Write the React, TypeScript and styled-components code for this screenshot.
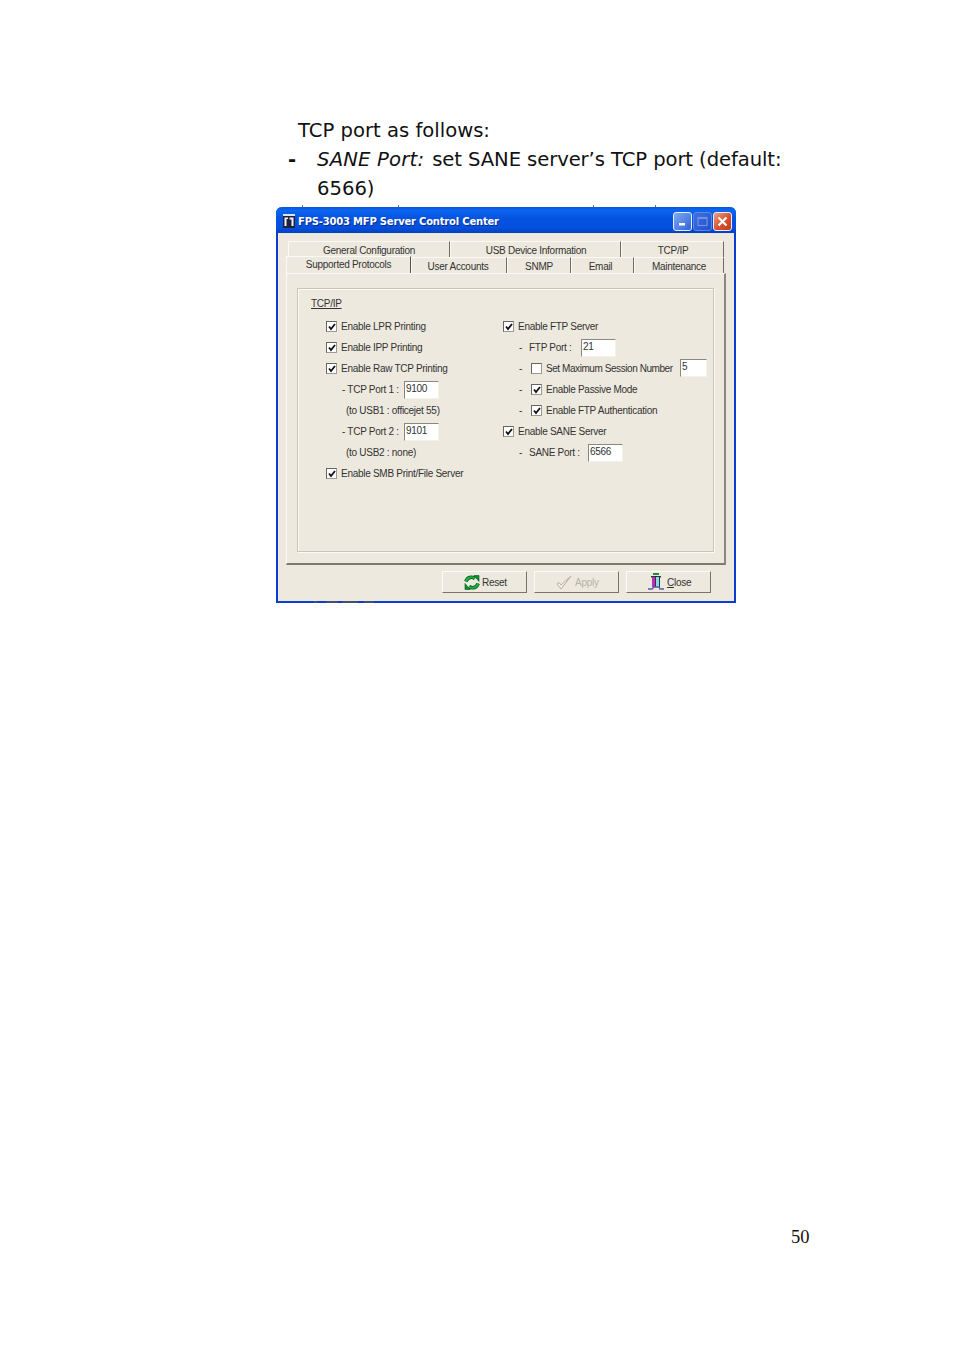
import React from "react";
import styled, { createGlobalStyle } from "styled-components";

const Global = createGlobalStyle`
  html, body { margin: 0; padding: 0; background: #fff; }
`;

const Page = styled.div`
  width: 954px;
  height: 1351px;
  position: relative;
  overflow: hidden;
  padding-top: 116px;
  box-sizing: border-box;
  font-family: "DejaVu Sans", Verdana, sans-serif;
  font-size: 19.6px;
  color: #111;
`;

const DocLine = styled.div<{ $indent: number }>`
  height: 29px;
  line-height: 29px;
  padding-left: ${(p) => p.$indent}px;
  white-space: pre;
  display: flex;
`;

const Dash = styled.span`
  width: 29px;
  margin-left: -29px;
  font-weight: bold;
`;

const Em = styled.em`
  font-style: italic;
  letter-spacing: 0.2px;
  margin-right: 8px;
`;

const DocRest = styled.span`
  letter-spacing: -0.09px;
`;

const Window = styled.div`
  position: relative;
  margin: 4px 0 0 276px;
  width: 460px;
  height: 396px;
  box-sizing: border-box;
  background: #ede9de;
  border: solid #0a3ed0;
  border-width: 0 2px 2px 2px;
  border-radius: 6px 6px 0 0;
  font-family: "Liberation Sans", Arial, sans-serif;
  font-size: 10px;
  letter-spacing: -0.28px;
  color: #333;
  display: flex;
  flex-direction: column;
`;

const Ticks = styled.div`
  position: absolute;
  top: -2px;
  left: 0;
  width: 100%;
  height: 2px;
`;

const Tick = styled.i<{ $x: number }>`
  position: absolute;
  left: ${(p) => p.$x}px;
  top: 0;
  width: 1px;
  height: 2px;
  background: #666;
`;

const Remnant = styled.svg`
  position: absolute;
  left: 34px;
  top: 394px;
`;

const TitleBar = styled.div`
  height: 26px;
  margin: 0 -2px;
  flex: none;
  border-radius: 6px 6px 0 0;
  background: linear-gradient(180deg, #0a56d8 0%, #0b66f0 12%, #0453e0 45%, #0450dc 80%, #0340c0 100%);
  display: flex;
  align-items: center;
  padding: 2px 4px 0 7px;
  box-sizing: border-box;
`;

const TitleText = styled.div`
  margin-left: 3px;
  color: #fff;
  font-family: "DejaVu Sans", Verdana, sans-serif;
  font-weight: bold;
  font-size: 10px;
  letter-spacing: -0.2px;
  text-shadow: 1px 1px 0 #0a2a90;
  flex: 1;
  white-space: nowrap;
`;

const CaptionBtn = styled.div<{ $kind: "min" | "max" | "close" }>`
  width: 19px;
  height: 19px;
  margin-left: 1px;
  box-sizing: border-box;
  border: 1px solid ${(p) => (p.$kind === "max" ? "#5f86e0" : "#e6edfc")};
  border-radius: 3px;
  display: flex;
  align-items: center;
  justify-content: center;
  background: ${(p) =>
    p.$kind === "close"
      ? "linear-gradient(135deg,#ea9f84,#d9512c 55%,#c23a1a)"
      : p.$kind === "max"
      ? "linear-gradient(135deg,#3f6fe0,#2052cf)"
      : "linear-gradient(135deg,#82a8f0,#2d64dc)"};
`;

const Body = styled.div`
  flex: 1;
  display: flex;
  flex-direction: column;
  padding: 0 8px;
`;

const Tabs = styled.div`
  padding-top: 8px;
`;

const TabRow = styled.div`
  display: flex;
  height: 16px;
  margin-left: 2px;
  position: relative;
`;

const Tab = styled.div<{ $w: number; $active?: boolean; $shift?: number }>`
  width: ${(p) => p.$w}px;
  box-sizing: border-box;
  text-align: center;
  line-height: 17px;
  padding-left: ${(p) => Math.max(p.$shift ?? 0, 0)}px;
  padding-right: ${(p) => Math.max(-(p.$shift ?? 0), 0)}px;
  border-top: 1px solid #fbfaf4;
  border-left: 1px solid #fbfaf4;
  border-right: 1px solid #6f6c60;
  white-space: nowrap;
  ${(p) =>
    p.$active &&
    `margin-top:-1px;margin-left:-2px;height:17px;line-height:16px;z-index:2;background:#ede9de;border-right:1px solid #55534a;`}
`;

const Panel = styled.div`
  box-sizing: border-box;
  height: 292px;
  padding: 14px 10px 0 10px;
  border-top: 1px solid #fbfaf4;
  border-left: 1px solid #fbfaf4;
  border-right: 2px solid #8b897c;
  border-bottom: 2px solid #7c7a6e;
`;

const Group = styled.div`
  box-sizing: border-box;
  height: 264px;
  border: 1px solid #c8c6b6;
  box-shadow: inset 1px 1px 0 #fbfaf4, 1px 1px 0 #fbfaf4;
  padding: 8px 0 0 13px;
`;

const GroupTitle = styled.div`
  height: 14px;
  line-height: 14px;
  text-decoration: underline;
  margin-bottom: 5px;
`;

const Columns = styled.div`
  display: flex;
`;

const Col = styled.div<{ $w: number; $pad: number }>`
  width: ${(p) => p.$w}px;
  padding-left: ${(p) => p.$pad}px;
  box-sizing: border-box;
`;

const Row = styled.div<{ $indent?: number }>`
  height: 21px;
  display: flex;
  align-items: center;
  padding-left: ${(p) => p.$indent ?? 0}px;
  white-space: pre;
`;

const Label = styled.span<{ $w: number; $tight?: boolean }>`
  width: ${(p) => p.$w}px;
  flex: none;
  letter-spacing: ${(p) => (p.$tight ? "-0.43px" : "inherit")};
`;

const DashMark = styled.span<{ $w: number }>`
  width: ${(p) => p.$w}px;
  flex: none;
`;

const Box = styled.span`
  width: 11px;
  height: 11px;
  box-sizing: border-box;
  margin: 0 4px 0 -1px;
  flex: none;
  background: #fff;
  border: 1px solid;
  border-color: #666660 #9a9a90 #9a9a90 #666660;
  display: flex;
  align-items: center;
  justify-content: center;
`;

const BoxGap = styled.span`
  width: 1px;
  flex: none;
`;

const Field = styled.span<{ $w: number; $raise?: boolean }>`
  width: ${(p) => p.$w}px;
  height: 18px;
  box-sizing: border-box;
  padding-left: 1px;
  line-height: 14px;
  background: #fff;
  border: 1px solid;
  border-color: #8a887c #f4f2e8 #f4f2e8 #8a887c;
  flex: none;
  margin-top: ${(p) => (p.$raise ? "-2px" : "0")};
`;

const Footer = styled.div`
  display: flex;
  justify-content: flex-end;
  gap: 7px;
  padding: 6px 15px 0 0;
`;

const Button = styled.div<{ $off?: boolean; $gap?: number }>`
  width: 85px;
  height: 22px;
  box-sizing: border-box;
  border: 1px solid;
  border-color: #fbfaf4 #77756a #77756a #fbfaf4;
  display: flex;
  align-items: center;
  padding-left: 21px;
  gap: ${(p) => p.$gap ?? 2}px;
  color: ${(p) => (p.$off ? "#b6b4a6" : "#333")};
`;

const Mnemonic = styled.span`
  text-decoration: underline;
`;

const PageNum = styled.div`
  position: absolute;
  left: 791px;
  top: 1227px;
  font-family: "Liberation Serif", "Times New Roman", serif;
  font-size: 18.5px;
  color: #111;
`;

const Check = () => (
  <svg width="8" height="8" viewBox="0 0 8 8">
    <path d="M1 3.5 L3 6 L7 1" fill="none" stroke="#111" strokeWidth="1.8" />
  </svg>
);

const Logo = () => (
  <svg width="12" height="14" viewBox="0 0 12 14">
    <rect width="12" height="14" fill="#1b2340" />
    <rect x="0" y="0" width="12" height="2" fill="#dde3f2" />
    <path d="M1.5 3.5 H5 V5 H3.5 V12 H1.5 Z M6.5 3.5 H10.5 V12 H8.5 V5.5 H6.5 Z" fill="#f2f2f2" />
  </svg>
);

const ResetIcon = () => (
  <svg width="16" height="15" viewBox="0 0 16 15">
    <path d="M2 6.5 C3 2.5 8 1 11 3.5" fill="none" stroke="#06501e" strokeWidth="3.6" />
    <path d="M14 8.5 C13 12.5 8 14 5 11.5" fill="none" stroke="#06501e" strokeWidth="3.6" />
    <path d="M10 0.5 L15 0.5 L15 6.5 Z" fill="#0c8f2c" stroke="#06501e" strokeWidth=".6" />
    <path d="M6 14.5 L1 14.5 L1 8.5 Z" fill="#0c8f2c" stroke="#06501e" strokeWidth=".6" />
    <path d="M2 6.5 C3 2.5 8 1 11 3.5" fill="none" stroke="#19b33f" strokeWidth="2.2" />
    <path d="M14 8.5 C13 12.5 8 14 5 11.5" fill="none" stroke="#19b33f" strokeWidth="2.2" />
  </svg>
);

const ApplyIcon = () => (
  <svg width="16" height="15" viewBox="0 0 16 15">
    <path d="M1 9 L5 14 L15 1 L5 10 L3 7.5 Z" fill="#f4f2e8" stroke="#b0ae9f" strokeWidth="1" />
  </svg>
);

const CloseIcon = () => (
  <svg width="16" height="18" viewBox="0 0 16 18">
    <rect x="5" y="0" width="6" height="2" fill="#1d8a3a" />
    <rect x="3" y="3" width="10" height="1.5" fill="#333" />
    <rect x="4" y="4" width="3" height="10" fill="#c02bc0" />
    <rect x="7" y="4" width="1" height="10" fill="#333" />
    <rect x="8" y="4" width="3" height="10" fill="#7fdfe8" />
    <rect x="11" y="4" width="1" height="10" fill="#333" />
    <path d="M0 16 H4 L6 14 H11 L12 16 H16" fill="none" stroke="#5a5aa8" strokeWidth="1.4" />
  </svg>
);

const CheckRow = ({
  label,
  on = true,
  dash,
  children,
}: {
  label?: string;
  on?: boolean;
  dash?: boolean;
  children?: React.ReactNode;
}) => (
  <Row $indent={dash ? 16 : 0}>
    {dash && <DashMark $w={12}>-</DashMark>}
    <BoxGap />
    <Box>{on && <Check />}</Box>
    {label}
    {children}
  </Row>
);

export default function App() {
  return (
    <Page>
      <Global />
      <DocLine $indent={298}>TCP port as follows:</DocLine>
      <DocLine $indent={317}>
        <Dash>-</Dash>
        <Em>SANE Port:</Em>
        <DocRest>set SANE server’s TCP port (default:</DocRest>
      </DocLine>
      <DocLine $indent={317}>6566)</DocLine>
      <Window>
        <Ticks>
          <Tick $x={24} />
          <Tick $x={120} />
          <Tick $x={315} />
          <Tick $x={377} />
        </Ticks>
        <Remnant width="66" height="3" viewBox="0 0 66 3">
          <path d="M2 1 H5 M14 1 H26 M30 1 H46 M52 1 H62" stroke="#555" strokeWidth="1.4" />
        </Remnant>
        <TitleBar>
          <Logo />
          <TitleText>FPS-3003 MFP Server Control Center</TitleText>
          <CaptionBtn $kind="min">
            <svg width="10" height="10" viewBox="0 0 10 10"><rect x="1" y="7" width="6" height="2.5" fill="#fff" /></svg>
          </CaptionBtn>
          <CaptionBtn $kind="max">
            <svg width="11" height="11" viewBox="0 0 11 11"><rect x="1" y="1.5" width="9" height="8" fill="none" stroke="#6f92e2" strokeWidth="1.2" /><rect x="1" y="1" width="9" height="2" fill="#6f92e2" /></svg>
          </CaptionBtn>
          <CaptionBtn $kind="close">
            <svg width="13" height="13" viewBox="0 0 13 13"><path d="M2.5 2.5 L10.5 10.5 M10.5 2.5 L2.5 10.5" stroke="#fff" strokeWidth="2.2" /></svg>
          </CaptionBtn>
        </TitleBar>
        <Body>
          <Tabs>
            <TabRow>
              <Tab $w={162}>General Configuration</Tab>
              <Tab $w={171} $shift={1}>USB Device Information</Tab>
              <Tab $w={103} $shift={1}>TCP/IP</Tab>
            </TabRow>
            <TabRow>
              <Tab $w={125} $active>Supported Protocols</Tab>
              <Tab $w={96} $shift={-2}>User Accounts</Tab>
              <Tab $w={64}>SNMP</Tab>
              <Tab $w={63} $shift={-4}>Email</Tab>
              <Tab $w={90}>Maintenance</Tab>
            </TabRow>
          </Tabs>
          <Panel>
            <Group>
              <GroupTitle>TCP/IP</GroupTitle>
              <Columns>
                <Col $w={192} $pad={15}>
                  <CheckRow label="Enable LPR Printing" />
                  <CheckRow label="Enable IPP Printing" />
                  <CheckRow label="Enable Raw TCP Printing" />
                  <Row $indent={16}><Label $w={62}>- TCP Port 1 :</Label><Field $w={35}>9100</Field></Row>
                  <Row $indent={20}>(to USB1 : officejet 55)</Row>
                  <Row $indent={16}><Label $w={62}>- TCP Port 2 :</Label><Field $w={35}>9101</Field></Row>
                  <Row $indent={20}>(to USB2 : none)</Row>
                  <CheckRow label="Enable SMB Print/File Server" />
                </Col>
                <Col $w={210} $pad={0}>
                  <CheckRow label="Enable FTP Server" />
                  <Row $indent={16}><DashMark $w={10}>-</DashMark><Label $w={52}>FTP Port :</Label><Field $w={35}>21</Field></Row>
                  <CheckRow dash on={false}>
                    <Label $w={134} $tight>Set Maximum Session Number</Label>
                    <Field $w={27} $raise>5</Field>
                  </CheckRow>
                  <CheckRow label="Enable Passive Mode" dash />
                  <CheckRow label="Enable FTP Authentication" dash />
                  <CheckRow label="Enable SANE Server" />
                  <Row $indent={16}><DashMark $w={10}>-</DashMark><Label $w={59}>SANE Port :</Label><Field $w={35}>6566</Field></Row>
                </Col>
              </Columns>
            </Group>
          </Panel>
          <Footer>
            <Button><ResetIcon />Reset</Button>
            <Button $off $gap={3}><ApplyIcon />Apply</Button>
            <Button $gap={3}><CloseIcon /><span><Mnemonic>C</Mnemonic>lose</span></Button>
          </Footer>
        </Body>
      </Window>
      <PageNum>50</PageNum>
    </Page>
  );
}
